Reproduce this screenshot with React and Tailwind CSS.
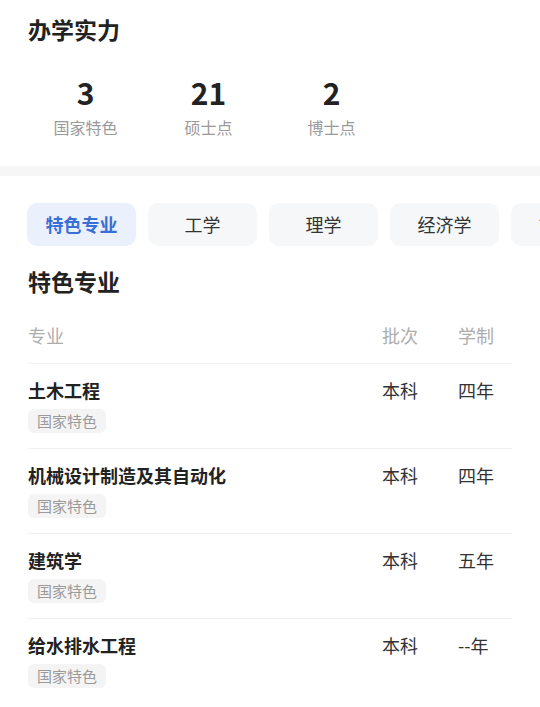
import React from 'react';

const stats = [
  { value: '3', label: '国家特色' },
  { value: '21', label: '硕士点' },
  { value: '2', label: '博士点' },
];

const tabs = ['特色专业', '工学', '理学', '经济学', '管理学'];

const majors = [
  { name: '土木工程', level: '本科', years: '四年' },
  { name: '机械设计制造及其自动化', level: '本科', years: '四年' },
  { name: '建筑学', level: '本科', years: '五年' },
  { name: '给水排水工程', level: '本科', years: '--年' },
];

export default function App() {
  return (
    <div
      className="w-[540px] h-[707px] overflow-hidden bg-white text-[#222]"
      style={{ fontFamily: '"Noto Sans CJK SC", "Noto Sans", sans-serif' }}
    >
      {/* 办学实力 */}
      <div className="px-7 pt-[14px] pb-[29px]">
        <h2 className="text-[23px] leading-[30px] font-bold">办学实力</h2>
        <div className="flex mt-[30px] -ml-[4px]">
          {stats.map((s) => (
            <div key={s.label} className="w-[123px] flex flex-col items-center">
              <span className="text-[30px] leading-[36px] font-bold text-[#222]">{s.value}</span>
              <span className="mt-[7px] text-[16px] leading-[20px] text-[#9a9a9a]">{s.label}</span>
            </div>
          ))}
        </div>
      </div>

      <div className="h-[10px] bg-[#f6f6f7]" />

      {/* 分类标签 */}
      <div className="pt-[27px] pl-[27px] flex gap-[12px] overflow-hidden">
        {tabs.map((t, i) => (
          <div
            key={t}
            className={
              i === 0
                ? 'shrink-0 w-[109px] h-[43px] rounded-[10px] bg-[#eaf1fd] text-[#3a6fd6] font-semibold text-[18px] flex items-center justify-center'
                : 'shrink-0 w-[109px] h-[43px] rounded-[10px] bg-[#f6f7f9] text-[#333] text-[18px] flex items-center justify-center'
            }
          >
            {t}
          </div>
        ))}
      </div>

      {/* 特色专业 列表 */}
      <div className="px-7">
        <h3 className="mt-[20px] text-[23px] leading-[30px] font-bold">特色专业</h3>

        <div className="mt-[27px] flex pb-[16px] border-b border-[#f0f0f0] text-[18px] leading-[24px] text-[#adadad]">
          <span className="flex-1">专业</span>
          <span className="w-[76px]">批次</span>
          <span className="w-[54px]">学制</span>
        </div>

        {majors.map((m, i) => (
          <div
            key={m.name}
            className={
              i < majors.length - 1
                ? 'flex pt-[14px] pb-[15px] border-b border-[#f0f0f0]'
                : 'flex pt-[14px] pb-[15px]'
            }
          >
            <div className="flex-1 flex flex-col items-start">
              <span className="text-[18px] leading-[24px] font-bold text-[#222]">{m.name}</span>
              <span className="mt-[7px] h-[24px] px-[9px] rounded-[6px] bg-[#f4f4f4] text-[15px] leading-[24px] text-[#9a9a9a]">
                国家特色
              </span>
            </div>
            <span className="w-[76px] text-[18px] leading-[24px] text-[#333]">{m.level}</span>
            <span className="w-[54px] text-[18px] leading-[24px] text-[#333]">{m.years}</span>
          </div>
        ))}
      </div>
    </div>
  );
}
